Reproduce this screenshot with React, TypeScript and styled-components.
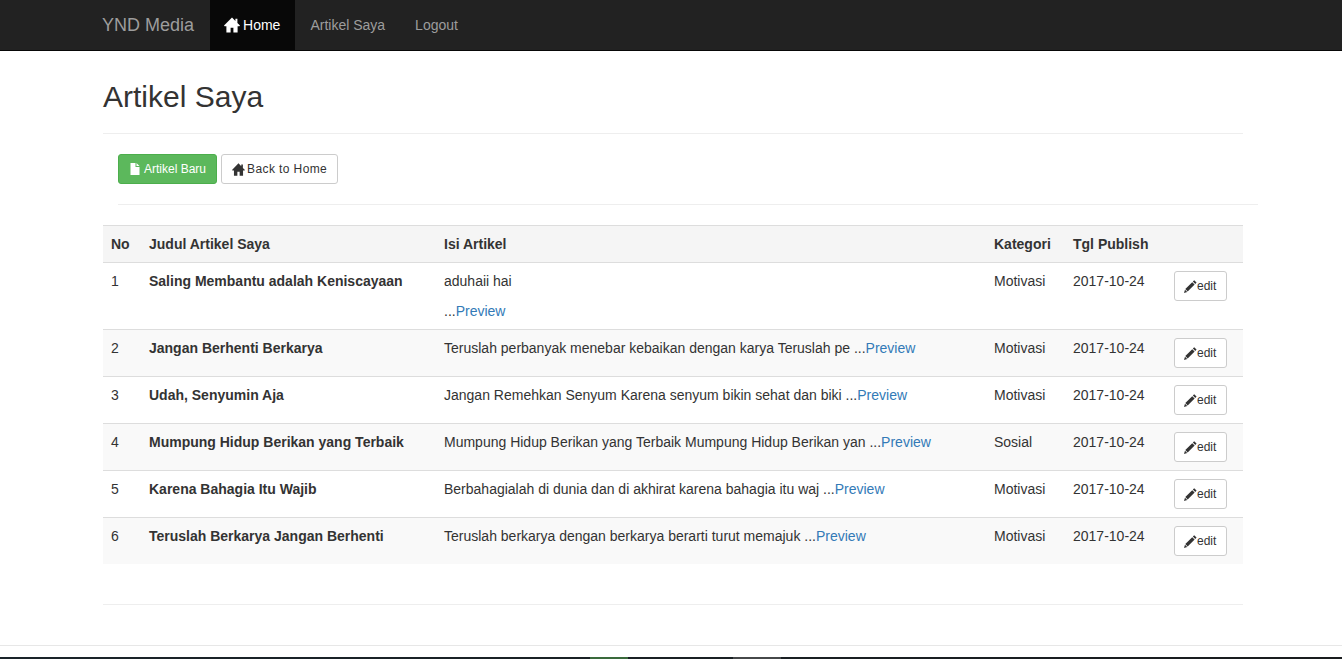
import React from "react";
import styled, { createGlobalStyle } from "styled-components";

const Global = createGlobalStyle`
  html, body { margin: 0; padding: 0; background: #fff; }
  body { font-family: "Liberation Sans", Arial, sans-serif; font-size: 14px; line-height: 20px; color: #333; }
  * { box-sizing: border-box; }
`;

const Page = styled.div`
  height: 659px;
  overflow: hidden;
  display: flex;
  flex-direction: column;
`;
const Navbar = styled.nav`
  height: 51px;
  flex: none;
  background: #222;
  border-bottom: 1px solid #080808;
  padding-left: 87px;
  display: flex;
`;
const Brand = styled.a`
  padding: 15px 16px 15px 15px;
  font-size: 18px;
  line-height: 20px;
  color: #9d9d9d;
`;
const NavLink = styled.a<{ $active?: boolean }>`
  padding: 15px;
  line-height: 20px;
  color: ${(p) => (p.$active ? "#fff" : "#9d9d9d")};
  background: ${(p) => (p.$active ? "#080808" : "transparent")};
  display: flex;
  align-items: center;
`;
const Main = styled.main`
  width: 1140px;
  margin-left: 103px;
  flex: none;
`;
const Title = styled.h1`
  margin: 0;
  padding-top: 26px;
  font-size: 30px;
  font-weight: 400;
  line-height: 40px;
  color: #333;
  height: 82px;
`;
const Rule = styled.hr`
  border: 0;
  border-top: 1px solid #eee;
  margin: 0;
`;
const Actions = styled.div`
  padding: 20px 0 20px 15px;
  margin-right: -15px;
`;
const ButtonRow = styled.div`
  display: flex;
  gap: 4px;
  margin-bottom: 20px;
`;
const Btn = styled.a<{ $green?: boolean }>`
  display: inline-flex;
  align-items: center;
  height: 30px;
  padding: 0 10px;
  font-size: 12px;
  line-height: 18px;
  border-radius: 3px;
  letter-spacing: ${(p) => (p.$green ? "0" : "0.4px")};
  border: 1px solid ${(p) => (p.$green ? "#4cae4c" : "#ccc")};
  background: ${(p) => (p.$green ? "#5cb85c" : "#fff")};
  color: ${(p) => (p.$green ? "#fff" : "#333")};
`;
const Table = styled.table`
  width: 1140px;
  table-layout: fixed;
  border-collapse: collapse;
  border-spacing: 0;
`;
const Th = styled.th`
  text-align: left;
  font-weight: 700;
  padding: 8px;
  line-height: 20px;
  height: 37px;
  background: #f5f5f5;
  border-top: 1px solid #ddd;
  border-bottom: 1px solid #ddd;
`;
const Tr = styled.tr<{ $odd?: boolean }>`
  background: ${(p) => (p.$odd ? "#f9f9f9" : "#fff")};
`;
const Td = styled.td`
  padding: 8px;
  vertical-align: top;
  line-height: 20px;
  border-top: 1px solid #ddd;
`;
const TitleCell = styled(Td)`
  font-weight: 700;
`;
const Excerpt = styled.p`
  margin: 0;
  & + & { margin-top: 10px; }
`;
const Preview = styled.a`
  color: #337ab7;
`;
const EditBtn = styled.a`
  display: inline-flex;
  align-items: center;
  height: 30px;
  padding: 0 10px 0 9px;
  font-size: 12px;
  border: 1px solid #ccc;
  border-radius: 3px;
  background: #fff;
  color: #333;
`;
const BottomRule = styled(Rule)`
  margin-top: 40px;
`;
const Spacer = styled.div`
  flex: 1;
`;
const FooterLine = styled.div`
  flex: none;
  height: 1px;
  background: #e7e7e7;
`;
const FooterGap = styled.div`
  flex: none;
  height: 11px;
`;
const Taskbar = styled.div`
  flex: none;
  height: 2px;
  background: linear-gradient(90deg, #1a242a, #191c1e);
  display: flex;
  padding-left: 590px;
`;
const TaskItem = styled.span<{ $w: number; $c: string; $ml?: number }>`
  width: ${(p) => p.$w}px;
  margin-left: ${(p) => p.$ml || 0}px;
  background: ${(p) => p.$c};
`;

const Svg = styled.svg<{ $mr?: number; $ml?: number }>`
  flex: none;
  margin-left: ${(p) => p.$ml ?? 0}px;
  margin-right: ${(p) => p.$mr ?? 0}px;
  fill: currentColor;
`;
const HomeIcon = ({ size, mr, ml }: { size: number; mr?: number; ml?: number }) => (
  <Svg $mr={mr} $ml={ml} width={size} height={size} viewBox="0 0 16 16" aria-hidden="true">
    <path d="M8 .4 0 8.6l.6.6H2.4V15.6h4.2v-4.8h2.8v4.8h4.2V9.2h1.8l.6-.6-2.6-2.6V1.8h-2v2.2L8 .4z" />
  </Svg>
);
const FileIcon = () => (
  <Svg $mr={3} width={12} height={12} viewBox="0 0 12 12" aria-hidden="true">
    <path d="M1.5 0h5v4h4v8h-9V0zM7.5 0l3 3h-3V0z" />
  </Svg>
);
const PencilIcon = () => (
  <Svg width={13} height={13} viewBox="0 0 12 12" aria-hidden="true">
    <path d="M9.4.2 11.6 2.4 10.4 3.6 8.2 1.4zM7.6 2l2.2 2.2L3.4 10.6 1.2 8.4zM.9 9 3 11.1 0 12z" />
  </Svg>
);

const rows = [
  ["Saling Membantu adalah Keniscayaan", "aduhaii hai", "Motivasi"],
  ["Jangan Berhenti Berkarya", "Teruslah perbanyak menebar kebaikan dengan karya Teruslah pe ", "Motivasi"],
  ["Udah, Senyumin Aja", "Jangan Remehkan Senyum Karena senyum bikin sehat dan biki ", "Motivasi"],
  ["Mumpung Hidup Berikan yang Terbaik", "Mumpung Hidup Berikan yang Terbaik Mumpung Hidup Berikan yan ", "Sosial"],
  ["Karena Bahagia Itu Wajib", "Berbahagialah di dunia dan di akhirat karena bahagia itu waj ", "Motivasi"],
  ["Teruslah Berkarya Jangan Berhenti", "Teruslah berkarya dengan berkarya berarti turut memajuk ", "Motivasi"],
];

export default function App() {
  return (
    <Page>
      <Global />
      <Navbar>
        <Brand>YND Media</Brand>
        <NavLink $active>
          <HomeIcon size={16} mr={3} ml={-1} />
          Home
        </NavLink>
        <NavLink>Artikel Saya</NavLink>
        <NavLink>Logout</NavLink>
      </Navbar>
      <Main>
        <Title>Artikel Saya</Title>
        <Rule />
        <Actions>
          <ButtonRow>
            <Btn $green>
              <FileIcon />
              Artikel Baru
            </Btn>
            <Btn>
              <HomeIcon size={13} mr={2} />
              Back to Home
            </Btn>
          </ButtonRow>
          <Rule />
        </Actions>
        <Table>
          <colgroup>
            <col width={38} />
            <col width={295} />
            <col width={550} />
            <col width={79} />
            <col width={101} />
            <col width={77} />
          </colgroup>
          <thead>
            <tr>
              <Th>No</Th>
              <Th>Judul Artikel Saya</Th>
              <Th>Isi Artikel</Th>
              <Th>Kategori</Th>
              <Th>Tgl Publish</Th>
              <Th />
            </tr>
          </thead>
          <tbody>
            {rows.map((r, i) => (
              <Tr key={r[0]} $odd={i % 2 === 1}>
                <Td>{i + 1}</Td>
                <TitleCell>{r[0]}</TitleCell>
                <Td>
                  {i === 0 ? (
                    <>
                      <Excerpt>{r[1]}</Excerpt>
                      <Excerpt>
                        ...<Preview>Preview</Preview>
                      </Excerpt>
                    </>
                  ) : (
                    <Excerpt>
                      {r[1]}...<Preview>Preview</Preview>
                    </Excerpt>
                  )}
                </Td>
                <Td>{r[2]}</Td>
                <Td>2017-10-24</Td>
                <Td>
                  <EditBtn>
                    <PencilIcon />
                    edit
                  </EditBtn>
                </Td>
              </Tr>
            ))}
          </tbody>
        </Table>
        <BottomRule />
      </Main>
      <Spacer />
      <FooterLine />
      <FooterGap />
      <Taskbar>
        <TaskItem $w={38} $c="#3a6a3c" />
        <TaskItem $w={48} $ml={105} $c="#46484a" />
      </Taskbar>
    </Page>
  );
}
